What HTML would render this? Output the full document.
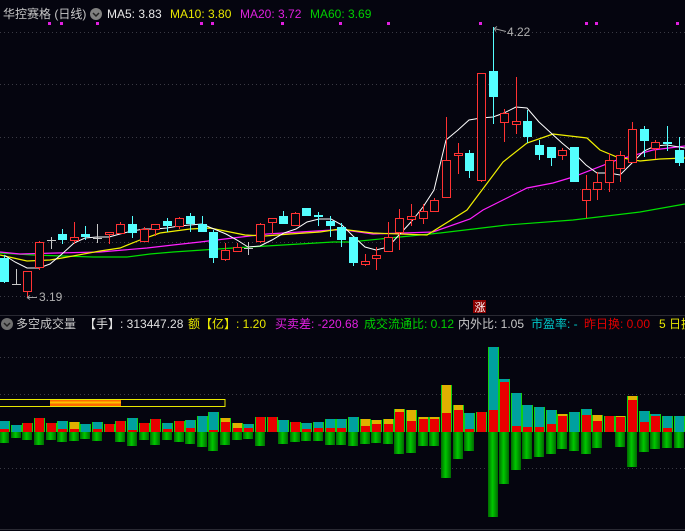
<!DOCTYPE html>
<html><head><meta charset="utf-8"><style>
html,body{margin:0;padding:0;background:#05050f;}
svg{display:block;}
text{font-family:"Liberation Sans","Noto Sans CJK SC",sans-serif;font-size:12px;}
</style></head><body>
<svg width="685" height="531" viewBox="0 0 685 531" xmlns="http://www.w3.org/2000/svg">
<defs>
<linearGradient id="gg" x1="0" x2="1" y1="0" y2="0">
<stop offset="0" stop-color="#006a00"/><stop offset="0.45" stop-color="#00c800"/><stop offset="1" stop-color="#006a00"/>
</linearGradient>
</defs>
<rect width="685" height="531" fill="#05050f"/>
<!-- grid -->
<g stroke="#3a3a44" stroke-dasharray="1,3" stroke-width="1">
<line x1="0" x2="685" y1="32.5" y2="32.5"/><line x1="0" x2="685" y1="84.5" y2="84.5"/>
<line x1="0" x2="685" y1="137.5" y2="137.5"/><line x1="0" x2="685" y1="189.5" y2="189.5"/>
<line x1="0" x2="685" y1="242.5" y2="242.5"/><line x1="0" x2="685" y1="296.5" y2="296.5"/>
<line x1="0" x2="685" y1="357.5" y2="357.5"/><line x1="0" x2="685" y1="394.5" y2="394.5"/>
<line x1="0" x2="685" y1="468.5" y2="468.5"/>
</g>
<line x1="0" x2="685" y1="315.5" y2="315.5" stroke="#2a2a33"/>
<line x1="0" x2="685" y1="529.5" y2="529.5" stroke="#2a2a33"/>
<!-- magenta dots -->
<g fill="#e020e0">
<rect x="48" y="22" width="3" height="3"/><rect x="60" y="22" width="3" height="3"/><rect x="96" y="22" width="3" height="3"/>
<rect x="200" y="22" width="3" height="3"/><rect x="211" y="22" width="3" height="3"/><rect x="281" y="22" width="3" height="3"/>
<rect x="339" y="22" width="3" height="3"/><rect x="387" y="22" width="3" height="3"/><rect x="479" y="22" width="3" height="3"/>
<rect x="585" y="22" width="3" height="3"/><rect x="595" y="22" width="3" height="3"/><rect x="676" y="22" width="3" height="3"/>
</g>
<!-- header top -->
<text x="3" y="18" fill="#c8c8c8">华控赛格 (日线)</text>
<circle cx="96" cy="14" r="6" fill="#808080"/><path d="M93 13l3 3 3-3" stroke="#222" stroke-width="1.5" fill="none"/>
<text x="107" y="18" fill="#e8e8e8">MA5: 3.83</text>
<text x="170" y="18" fill="#e8e800">MA10: 3.80</text>
<text x="240" y="18" fill="#e020e0">MA20: 3.72</text>
<text x="310" y="18" fill="#00d000">MA60: 3.69</text>
<!-- MA lines -->
<polyline fill="none" stroke="#00e000" stroke-width="1.2" points="0,253 33,255 93,257 127,257 150,254 173,252 233,248 283,245 333,242 350,242 440,233 507,225 573,220 640,212 685,204"/>
<polyline fill="none" stroke="#ff20ff" stroke-width="1.2" points="0,252 20,254 57,253 100,252 147,248 173,245 200,242 233,238 267,234 300,232 333,230 345,230 373,234 433,232 470,219 483,210 527,188 553,183 573,177 617,160 653,150 685,146"/>
<polyline fill="none" stroke="#f0f000" stroke-width="1.2" points="0,255 27,261 50,260 62,258 100,251 120,248 140,240 160,233 190,229 210,228 225,231 245,235 265,236 290,234 305,233 320,232 340,229 373,233 427,235 467,210 503,162 527,143 553,134 587,138 600,150 617,157 640,161 660,159 685,158"/>
<polyline fill="none" stroke="#ffffff" stroke-width="1" points="4,255 15,262 27,268 39,268 50,264 62,254 74,243 85,238 97,237 109,237 120,234 132,231 144,229 155,229 167,228 179,226 190,225 202,224 214,229 226,234 237,240 248,247 260,246 272,240 284,233 296,229 307,222 319,219 331,219 342,225 353,236 365,247 376,250 388,247 399,235 411,222 423,207 434,190 446,140 458,130 469,120 481,118 493,117 504,113 516,107 527,108 539,122 551,133 562,143 574,153 586,165 597,173 609,173 620,175 632,163 644,151 655,146 667,145 679,147 685,148"/>
<!-- candles: wicks -->
<g stroke-width="1">
<g stroke="#54ffff">
<line x1="4.5" x2="4.5" y1="255" y2="283"/><line x1="62.5" x2="62.5" y1="229" y2="244"/><line x1="85.5" x2="85.5" y1="226" y2="240"/>
<line x1="132.5" x2="132.5" y1="216" y2="238"/><line x1="167.5" x2="167.5" y1="218" y2="232"/><line x1="190.5" x2="190.5" y1="213" y2="232"/>
<line x1="202.5" x2="202.5" y1="216" y2="232"/><line x1="213.5" x2="213.5" y1="230" y2="263"/><line x1="283.5" x2="283.5" y1="211" y2="224"/>
<line x1="318.5" x2="318.5" y1="212" y2="226"/><line x1="330.5" x2="330.5" y1="216" y2="237"/><line x1="341.5" x2="341.5" y1="223" y2="247"/>
<line x1="353.5" x2="353.5" y1="237" y2="266"/><line x1="469.5" x2="469.5" y1="150" y2="178"/><line x1="493.5" x2="493.5" y1="27" y2="124"/>
<line x1="527.5" x2="527.5" y1="110" y2="143"/><line x1="539.5" x2="539.5" y1="140" y2="160"/><line x1="551.5" x2="551.5" y1="147" y2="166"/>
<line x1="644.5" x2="644.5" y1="126" y2="157"/><line x1="667.5" x2="667.5" y1="126" y2="151"/><line x1="679.5" x2="679.5" y1="137" y2="166"/>
</g>
<g stroke="#ff3232">
<line x1="27.5" x2="27.5" y1="271" y2="297"/><line x1="39.5" x2="39.5" y1="241" y2="270"/><line x1="74.5" x2="74.5" y1="222" y2="244"/>
<line x1="109.5" x2="109.5" y1="232" y2="244"/><line x1="120.5" x2="120.5" y1="222" y2="233"/><line x1="144.5" x2="144.5" y1="227" y2="241"/>
<line x1="155.5" x2="155.5" y1="224" y2="236"/><line x1="179.5" x2="179.5" y1="217" y2="229"/><line x1="225.5" x2="225.5" y1="243" y2="261"/>
<line x1="237.5" x2="237.5" y1="243" y2="252"/><line x1="260.5" x2="260.5" y1="223" y2="243"/><line x1="272.5" x2="272.5" y1="218" y2="234"/>
<line x1="295.5" x2="295.5" y1="212" y2="225"/><line x1="365.5" x2="365.5" y1="254" y2="266"/><line x1="376.5" x2="376.5" y1="247" y2="270"/>
<line x1="388.5" x2="388.5" y1="222" y2="252"/><line x1="399.5" x2="399.5" y1="209" y2="250"/><line x1="411.5" x2="411.5" y1="204" y2="226"/>
<line x1="423.5" x2="423.5" y1="204" y2="224"/><line x1="434.5" x2="434.5" y1="198" y2="211"/><line x1="446.5" x2="446.5" y1="117" y2="197"/>
<line x1="458.5" x2="458.5" y1="143" y2="174"/><line x1="481.5" x2="481.5" y1="73" y2="182"/><line x1="504.5" x2="504.5" y1="109" y2="142"/>
<line x1="516.5" x2="516.5" y1="77" y2="134"/><line x1="562.5" x2="562.5" y1="148" y2="160"/><line x1="586.5" x2="586.5" y1="175" y2="218"/>
<line x1="597.5" x2="597.5" y1="172" y2="200"/><line x1="609.5" x2="609.5" y1="153" y2="192"/><line x1="620.5" x2="620.5" y1="151" y2="182"/>
<line x1="632.5" x2="632.5" y1="122" y2="162"/><line x1="655.5" x2="655.5" y1="140" y2="159"/>
</g>
<g stroke="#c8c8c8">
<line x1="16.5" x2="16.5" y1="269" y2="284"/><line x1="12" x2="21" y1="284.5" y2="284.5"/>
<line x1="51.5" x2="51.5" y1="237" y2="249"/><line x1="47" x2="56" y1="240.5" y2="240.5"/>
<line x1="97.5" x2="97.5" y1="224" y2="243"/><line x1="93" x2="102" y1="238.5" y2="238.5"/>
<line x1="248.5" x2="248.5" y1="242" y2="255"/><line x1="244" x2="253" y1="248.5" y2="248.5"/>
</g>
</g>
<!-- cyan bodies -->
<g fill="#54ffff">
<rect x="0" y="258" width="9" height="24"/><rect x="58" y="234" width="9" height="6"/><rect x="81" y="234" width="9" height="3"/>
<rect x="128" y="224" width="9" height="9"/><rect x="163" y="221" width="9" height="5"/><rect x="186" y="216" width="9" height="8"/>
<rect x="198" y="224" width="9" height="8"/><rect x="209" y="232" width="9" height="26"/><rect x="279" y="216" width="9" height="8"/>
<rect x="302" y="208" width="9" height="8"/><rect x="314" y="215" width="9" height="2"/><rect x="326" y="221" width="9" height="5"/>
<rect x="337" y="227" width="9" height="13"/><rect x="349" y="237" width="9" height="26"/><rect x="465" y="153" width="9" height="18"/>
<rect x="489" y="71" width="9" height="26"/><rect x="523" y="121" width="9" height="16"/><rect x="535" y="145" width="9" height="10"/>
<rect x="547" y="147" width="9" height="11"/><rect x="570" y="147" width="9" height="35"/><rect x="640" y="129" width="9" height="12"/>
<rect x="663" y="142" width="9" height="2"/><rect x="675" y="150" width="9" height="13"/>
</g>
<!-- red hollow bodies -->
<g fill="#05050f" stroke="#ff3232" stroke-width="1">
<rect x="23.5" y="271.5" width="8" height="20"/><rect x="35.5" y="242.5" width="8" height="25"/><rect x="70.5" y="237.5" width="8" height="3"/>
<rect x="105.5" y="232.5" width="8" height="2"/><rect x="116.5" y="224.5" width="8" height="9"/><rect x="140.5" y="229.5" width="8" height="12"/>
<rect x="151.5" y="224.5" width="8" height="5"/><rect x="175.5" y="218.5" width="8" height="8"/><rect x="221.5" y="250.5" width="8" height="9"/>
<rect x="233.5" y="247.5" width="8" height="4"/><rect x="256.5" y="224.5" width="8" height="17"/><rect x="268.5" y="218.5" width="8" height="4"/>
<rect x="291.5" y="213.5" width="8" height="12"/><rect x="361.5" y="261.5" width="8" height="3"/><rect x="372.5" y="255.5" width="8" height="3"/>
<rect x="384.5" y="237.5" width="8" height="14"/><rect x="395.5" y="218.5" width="8" height="14"/><rect x="407.5" y="216.5" width="8" height="3"/>
<rect x="419.5" y="211.5" width="8" height="7"/><rect x="430.5" y="200.5" width="8" height="11"/><rect x="442.5" y="160.5" width="8" height="37"/>
<rect x="454.5" y="153.5" width="8" height="2"/><rect x="477.5" y="73.5" width="8" height="107"/><rect x="500.5" y="113.5" width="8" height="9"/>
<rect x="512.5" y="121.5" width="8" height="3"/><rect x="558.5" y="150.5" width="8" height="5"/><rect x="582.5" y="189.5" width="8" height="11"/>
<rect x="593.5" y="182.5" width="8" height="7"/><rect x="605.5" y="160.5" width="8" height="22"/><rect x="616.5" y="155.5" width="8" height="13"/>
<rect x="628.5" y="129.5" width="8" height="33"/><rect x="651.5" y="142.5" width="8" height="6"/>
</g>
<!-- price labels -->
<path d="M27 297.5h10M27 297.5l3-2M27 297.5l3 2" stroke="#a0a0a0" fill="none"/>
<text x="39" y="301" fill="#b0b0b0">3.19</text>
<path d="M494 28.5l12 3M494 28.5l3-2M494 28.5l2 3" stroke="#a0a0a0" fill="none"/>
<text x="507" y="36" fill="#b0b0b0">4.22</text>
<rect x="473" y="300" width="13" height="13" fill="#8b0000"/>
<text x="474.5" y="311" fill="#ffffff" style="font-size:11px">涨</text>
<!-- lower header -->
<circle cx="7" cy="324" r="6" fill="#707070"/><path d="M4 323l3 3 3-3" stroke="#222" stroke-width="1.5" fill="none"/>
<text x="16" y="328" fill="#c8c8c8">多空成交量</text>
<text x="84" y="328" fill="#e0e0e0">【手】: 313447.28</text>
<text x="188" y="328" fill="#e8e800">额【亿】: 1.20</text>
<text x="275" y="328" fill="#e020e0">买卖差: -220.68</text>
<text x="364" y="328" fill="#00d000">成交流通比: 0.12</text>
<text x="458" y="328" fill="#c8c8c8">内外比: 1.05</text>
<text x="531" y="328" fill="#00c8c8">市盈率: -</text>
<text x="584" y="328" fill="#e00000">昨日换: 0.00</text>
<text x="659" y="328" fill="#e8e800">5 日换</text>
<!-- yellow bar -->
<rect x="-1" y="399.5" width="226" height="7" fill="none" stroke="#e8e800" stroke-width="1"/>
<rect x="50" y="400" width="71" height="6" fill="#ff6a00"/>
<rect x="50" y="401.5" width="71" height="2" fill="#ffc000"/>
<!-- bottom green bars -->
<g fill="url(#gg)">
<rect x="-1" y="432" width="10" height="11"/><rect x="11" y="432" width="10" height="6"/><rect x="22" y="432" width="10" height="8"/>
<rect x="34" y="432" width="10" height="13"/><rect x="46" y="432" width="10" height="8"/><rect x="57" y="432" width="10" height="10"/>
<rect x="69" y="432" width="10" height="9"/><rect x="80" y="432" width="10" height="7"/><rect x="92" y="432" width="10" height="9"/>
<rect x="115" y="432" width="10" height="10"/><rect x="127" y="432" width="10" height="14"/>
<rect x="139" y="432" width="10" height="8"/><rect x="150" y="432" width="10" height="13"/><rect x="162" y="432" width="10" height="8"/>
<rect x="174" y="432" width="10" height="10"/><rect x="185" y="432" width="10" height="12"/><rect x="197" y="432" width="10" height="15"/>
<rect x="208" y="432" width="10" height="19"/><rect x="220" y="432" width="10" height="13"/><rect x="232" y="432" width="10" height="8"/>
<rect x="243" y="432" width="10" height="7"/><rect x="255" y="432" width="10" height="14"/>
<rect x="278" y="432" width="10" height="12"/><rect x="290" y="432" width="10" height="10"/><rect x="301" y="432" width="10" height="9"/>
<rect x="313" y="432" width="10" height="9"/><rect x="325" y="432" width="10" height="13"/><rect x="336" y="432" width="10" height="13"/>
<rect x="348" y="432" width="10" height="14"/><rect x="360" y="432" width="10" height="12"/><rect x="371" y="432" width="10" height="11"/>
<rect x="383" y="432" width="10" height="12"/><rect x="394" y="432" width="10" height="22"/><rect x="406" y="432" width="10" height="21"/>
<rect x="418" y="432" width="10" height="14"/><rect x="429" y="432" width="10" height="14"/><rect x="441" y="432" width="10" height="46"/>
<rect x="453" y="432" width="10" height="27"/><rect x="464" y="432" width="10" height="19"/>
<rect x="488" y="432" width="10" height="85"/><rect x="499" y="432" width="10" height="52"/><rect x="511" y="432" width="10" height="38"/>
<rect x="522" y="432" width="10" height="27"/><rect x="534" y="432" width="10" height="25"/><rect x="546" y="432" width="10" height="22"/>
<rect x="557" y="432" width="10" height="17"/><rect x="569" y="432" width="10" height="19"/><rect x="581" y="432" width="10" height="22"/>
<rect x="592" y="432" width="10" height="16"/><rect x="615" y="432" width="10" height="15"/>
<rect x="627" y="432" width="10" height="35"/><rect x="639" y="432" width="10" height="20"/><rect x="650" y="432" width="10" height="17"/>
<rect x="662" y="432" width="10" height="16"/><rect x="674" y="432" width="10" height="16"/>
</g>
<!-- upper volume bars: green frames -->
<g fill="#10d010">
<rect x="-1" y="421" width="11" height="11"/><rect x="11" y="425" width="11" height="7"/><rect x="22" y="423" width="11" height="9"/>
<rect x="34" y="418" width="11" height="14"/><rect x="46" y="423" width="11" height="9"/><rect x="57" y="421" width="11" height="11"/>
<rect x="69" y="422" width="11" height="10"/><rect x="80" y="424" width="11" height="8"/><rect x="92" y="422" width="11" height="10"/>
<rect x="104" y="424" width="11" height="8"/><rect x="115" y="421" width="11" height="11"/><rect x="127" y="418" width="11" height="14"/>
<rect x="139" y="423" width="11" height="9"/><rect x="150" y="419" width="11" height="13"/><rect x="162" y="423" width="11" height="9"/>
<rect x="174" y="421" width="11" height="11"/><rect x="185" y="420" width="11" height="12"/><rect x="197" y="416" width="11" height="16"/>
<rect x="208" y="412" width="11" height="20"/><rect x="220" y="418" width="11" height="14"/><rect x="232" y="423" width="11" height="9"/>
<rect x="243" y="424" width="11" height="8"/><rect x="255" y="417" width="11" height="15"/><rect x="267" y="417" width="11" height="15"/>
<rect x="278" y="420" width="11" height="12"/><rect x="290" y="422" width="11" height="10"/><rect x="301" y="423" width="11" height="9"/>
<rect x="313" y="422" width="11" height="10"/><rect x="325" y="419" width="11" height="13"/><rect x="336" y="419" width="11" height="13"/>
<rect x="348" y="417" width="11" height="15"/><rect x="360" y="419" width="11" height="13"/><rect x="371" y="420" width="11" height="12"/>
<rect x="383" y="419" width="11" height="13"/><rect x="394" y="409" width="11" height="23"/><rect x="406" y="410" width="11" height="22"/>
<rect x="418" y="417" width="11" height="15"/><rect x="429" y="417" width="11" height="15"/><rect x="441" y="385" width="11" height="47"/>
<rect x="453" y="405" width="11" height="27"/><rect x="464" y="413" width="11" height="19"/><rect x="476" y="412" width="11" height="20"/>
<rect x="488" y="347" width="11" height="85"/><rect x="499" y="379" width="11" height="53"/><rect x="511" y="393" width="11" height="39"/>
<rect x="522" y="405" width="11" height="27"/><rect x="534" y="407" width="11" height="25"/><rect x="546" y="410" width="11" height="22"/>
<rect x="557" y="414" width="11" height="18"/><rect x="569" y="412" width="11" height="20"/><rect x="581" y="409" width="11" height="23"/>
<rect x="592" y="415" width="11" height="17"/><rect x="604" y="416" width="11" height="16"/><rect x="615" y="416" width="11" height="16"/>
<rect x="627" y="396" width="11" height="36"/><rect x="639" y="411" width="11" height="21"/><rect x="650" y="414" width="11" height="18"/>
<rect x="662" y="416" width="11" height="16"/><rect x="674" y="416" width="11" height="16"/>
</g>
<!-- cyan fills -->
<g fill="#00a0a0">
<rect x="0" y="421" width="9" height="11"/><rect x="12" y="425" width="9" height="7"/><rect x="58" y="421" width="9" height="11"/>
<rect x="81" y="424" width="9" height="8"/><rect x="93" y="422" width="9" height="10"/><rect x="128" y="418" width="9" height="14"/>
<rect x="163" y="423" width="9" height="9"/><rect x="186" y="420" width="9" height="12"/><rect x="198" y="416" width="9" height="16"/>
<rect x="209" y="412" width="9" height="20"/><rect x="244" y="424" width="9" height="8"/><rect x="279" y="420" width="9" height="12"/>
<rect x="302" y="423" width="9" height="9"/><rect x="314" y="422" width="9" height="10"/><rect x="326" y="419" width="9" height="13"/>
<rect x="337" y="419" width="9" height="13"/><rect x="349" y="417" width="9" height="15"/><rect x="465" y="413" width="9" height="19"/>
<rect x="489" y="347" width="9" height="85"/><rect x="500" y="379" width="9" height="3"/><rect x="512" y="393" width="9" height="39"/>
<rect x="523" y="405" width="9" height="27"/><rect x="535" y="407" width="9" height="25"/><rect x="547" y="410" width="9" height="22"/>
<rect x="570" y="412" width="9" height="20"/><rect x="582" y="409" width="9" height="23"/><rect x="640" y="411" width="9" height="21"/>
<rect x="651" y="414" width="9" height="2"/><rect x="663" y="416" width="9" height="16"/><rect x="675" y="416" width="9" height="16"/>
</g>
<!-- yellow fills -->
<g fill="#e0b000">
<rect x="70" y="422" width="9" height="7"/><rect x="221" y="418" width="9" height="4"/><rect x="233" y="423" width="9" height="5"/>
<rect x="361" y="419" width="9" height="7"/><rect x="372" y="420" width="9" height="4"/><rect x="384" y="419" width="9" height="5"/>
<rect x="395" y="409" width="9" height="3"/><rect x="407" y="410" width="9" height="11"/><rect x="419" y="417" width="9" height="2"/>
<rect x="430" y="417" width="9" height="2"/><rect x="442" y="385" width="9" height="28"/><rect x="454" y="405" width="9" height="5"/>
<rect x="558" y="414" width="9" height="2"/><rect x="593" y="415" width="9" height="6"/><rect x="616" y="416" width="9" height="1"/>
<rect x="628" y="396" width="9" height="4"/>
</g>
<!-- red fills -->
<g fill="#e80000">
<rect x="0" y="429" width="9" height="3"/><rect x="23" y="423" width="9" height="9"/><rect x="35" y="418" width="9" height="14"/>
<rect x="47" y="423" width="9" height="9"/><rect x="58" y="429" width="9" height="3"/><rect x="70" y="429" width="9" height="3"/>
<rect x="93" y="429" width="9" height="3"/><rect x="105" y="424" width="9" height="8"/><rect x="116" y="421" width="9" height="11"/>
<rect x="128" y="430" width="9" height="2"/><rect x="140" y="423" width="9" height="9"/><rect x="151" y="419" width="9" height="13"/>
<rect x="163" y="429" width="9" height="3"/><rect x="175" y="421" width="9" height="11"/><rect x="186" y="428" width="9" height="4"/>
<rect x="209" y="430" width="9" height="2"/><rect x="221" y="422" width="9" height="10"/><rect x="233" y="428" width="9" height="4"/>
<rect x="244" y="428" width="9" height="4"/><rect x="256" y="417" width="9" height="15"/><rect x="268" y="417" width="9" height="15"/>
<rect x="291" y="422" width="9" height="10"/><rect x="302" y="429" width="9" height="3"/><rect x="314" y="428" width="9" height="4"/>
<rect x="326" y="428" width="9" height="4"/><rect x="337" y="428" width="9" height="4"/><rect x="361" y="426" width="9" height="6"/>
<rect x="372" y="424" width="9" height="8"/><rect x="384" y="424" width="9" height="8"/><rect x="395" y="412" width="9" height="20"/>
<rect x="407" y="421" width="9" height="11"/><rect x="419" y="419" width="9" height="13"/><rect x="430" y="419" width="9" height="13"/>
<rect x="442" y="413" width="9" height="19"/><rect x="454" y="410" width="9" height="22"/><rect x="465" y="429" width="9" height="3"/>
<rect x="477" y="412" width="9" height="20"/><rect x="489" y="410" width="9" height="22"/><rect x="500" y="382" width="9" height="50"/>
<rect x="512" y="426" width="9" height="6"/><rect x="523" y="427" width="9" height="5"/><rect x="535" y="427" width="9" height="5"/>
<rect x="547" y="424" width="9" height="8"/><rect x="558" y="416" width="9" height="16"/><rect x="582" y="415" width="9" height="17"/>
<rect x="593" y="421" width="9" height="11"/><rect x="605" y="416" width="9" height="16"/><rect x="616" y="417" width="9" height="15"/>
<rect x="628" y="400" width="9" height="32"/><rect x="640" y="422" width="9" height="10"/><rect x="651" y="416" width="9" height="16"/>
<rect x="663" y="428" width="9" height="4"/>
</g>
</svg>
</body></html>
